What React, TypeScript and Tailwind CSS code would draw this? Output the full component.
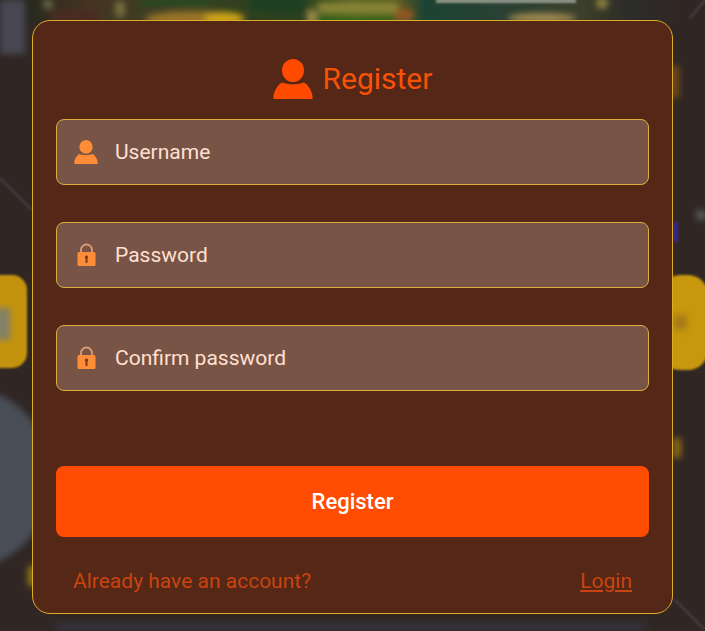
import { useState, type FormEvent, type ReactNode } from 'react';

interface FieldProps {
  id: string;
  label: string;
  type: string;
  icon: ReactNode;
  value: string;
  onChange: (v: string) => void;
}

export default function App() {
  const [username, setUsername] = useState('');
  const [password, setPassword] = useState('');
  const [confirm, setConfirm] = useState('');

  const handleSubmit = (e: FormEvent) => {
    e.preventDefault();
  };

  return (
    <div className="relative min-h-screen overflow-hidden bg-[#302725] px-8 pt-5 pb-4 font-['Roboto',sans-serif]">
      <Backdrop />

      <main className="relative rounded-[18px] border border-[#dcae28] bg-[#542716] px-[23px] pt-[38px] pb-[18px]">
        {/* Title */}
        <h1 className="mb-5 flex h-10 items-center justify-center gap-[10px] text-[30px] leading-10 text-[#f85208]">
          <UserIcon className="h-10 w-10 text-[#ff4a00]" />
          Register
        </h1>

        <form onSubmit={handleSubmit}>
          <div className="flex flex-col gap-[37px]">
            <Field
              id="username"
              label="Username"
              type="text"
              icon={<UserIcon className="h-6 w-6" />}
              value={username}
              onChange={setUsername}
            />
            <Field
              id="password"
              label="Password"
              type="password"
              icon={<LockIcon className="h-6 w-6" />}
              value={password}
              onChange={setPassword}
            />
            <Field
              id="confirm"
              label="Confirm password"
              type="password"
              icon={<LockIcon className="h-6 w-6" />}
              value={confirm}
              onChange={setConfirm}
            />
          </div>

          <button
            type="submit"
            className="mt-[75px] h-[71px] w-full rounded-lg bg-[#ff4c00] text-[22px] font-medium text-white"
          >
            Register
          </button>
        </form>

        {/* Footer */}
        <div className="mt-[30px] flex justify-between px-[17px] text-[21px] leading-7 text-[#c94410]">
          <span>Already have an account?</span>
          <a href="#login" className="underline">Login</a>
        </div>
      </main>
    </div>
  );
}

function Field({ id, label, type, icon, value, onChange }: FieldProps) {
  return (
    <div className="flex h-[66px] items-center gap-[17px] rounded-lg border border-[#dcae40] bg-[#785447] pl-[17px] text-[#ff8d37]">
      <label htmlFor={id} aria-label={label}>{icon}</label>
      <input
        id={id}
        type={type}
        placeholder={label}
        value={value}
        onChange={(e) => onChange(e.target.value)}
        className="h-full min-w-0 flex-1 bg-transparent text-[21px] text-[#ffe0d0] outline-none placeholder:text-[#ffe0d0]"
      />
    </div>
  );
}

/* Blurred game lobby behind the dialog */
function Backdrop() {
  return (
    <svg
      viewBox="0 0 705 631"
      preserveAspectRatio="xMidYMin slice"
      className="absolute inset-0 h-full w-full"
      aria-hidden="true"
    >
      <defs>
        <linearGradient id="lobby">
          <stop offset="0" stopColor="#26281f" />
          <stop offset="0.1" stopColor="#453522" />
          <stop offset="0.2" stopColor="#3d3e24" />
          <stop offset="0.3" stopColor="#33401f" />
          <stop offset="0.42" stopColor="#2c401f" />
          <stop offset="0.5" stopColor="#5a6424" />
          <stop offset="0.57" stopColor="#5d5a20" />
          <stop offset="0.61" stopColor="#1c4333" />
          <stop offset="0.75" stopColor="#2c4032" />
          <stop offset="0.85" stopColor="#3c3f2a" />
          <stop offset="0.92" stopColor="#2c2c28" />
          <stop offset="1" stopColor="#302725" />
        </linearGradient>
        <filter id="soft" x="-50%" y="-50%" width="200%" height="200%">
          <feGaussianBlur stdDeviation="3" />
        </filter>
        <filter id="edge">
          <feGaussianBlur stdDeviation="1" />
        </filter>
      </defs>

      <rect x="24" width="657" height="22" fill="url(#lobby)" />
      <g filter="url(#soft)">
        <rect x="50" y="10" width="50" height="12" fill="#4c2c22" />
        <rect x="140" y="-2" width="70" height="8" fill="#254a22" />
        <rect x="250" y="-2" width="56" height="14" fill="#1d3f20" />
        <ellipse cx="120" cy="9" rx="5" ry="9" fill="#7a7040" />
        <ellipse cx="48" cy="4" rx="5" ry="5" fill="#6b6a48" />
        <ellipse cx="195" cy="19" rx="50" ry="8" fill="#9a7328" />
        <ellipse cx="224" cy="18" rx="20" ry="6" fill="#cfa414" />
        <rect x="318" y="3" width="80" height="10" fill="#8a8634" />
        <rect x="318" y="15" width="80" height="6" fill="#2c6814" />
        <ellipse cx="312" cy="17" rx="5" ry="8" fill="#a08e50" />
        <ellipse cx="404" cy="15" rx="10" ry="7" fill="#8f5423" />
        <ellipse cx="542" cy="18" rx="34" ry="5" fill="#a08a50" />
        <circle cx="602" cy="3" r="6" fill="#8c8040" />
        <rect width="25" height="54" fill="#474751" />
        <circle cx="-40" cy="478" r="92" fill="#4a4d57" />
        <rect x="671" y="66" width="8" height="32" fill="#744b18" />
        <circle cx="701" cy="215" r="5" fill="#59605f" />
        <rect x="673" y="438" width="8" height="20" fill="#8a6c14" />
        <rect x="28" y="566" width="8" height="20" fill="#96790d" />
        <rect x="56" y="623" width="590" height="8" fill="#34313c" />
      </g>
      <g filter="url(#edge)">
        <rect x="436" y="-1" width="140" height="4" fill="#8e9488" />
        <path d="M0 178l32 32M675 600l30 30M690 18l15-18" stroke="#474144" strokeWidth="2" />
        <rect x="673" y="222" width="5" height="20" fill="#30258a" />
        <rect x="-40" y="275" width="67" height="93" rx="15" fill="#c4930e" />
        <rect x="660" y="275" width="48" height="95" rx="20" fill="#c79708" />
      </g>
      <g filter="url(#soft)">
        <rect x="-4" y="308" width="14" height="32" fill="#80806c" />
        <rect x="673" y="315" width="14" height="15" fill="#a67c12" />
      </g>
    </svg>
  );
}

function UserIcon({ className }: { className: string }) {
  return (
    <svg viewBox="0 0 40 40" fill="currentColor" className={className} aria-hidden="true">
      <ellipse cx="20" cy="11.500" rx="11" ry="11.500" />
      <path d="M9 23.500c3 1.200 6.500 1.800 11 1.800s8-.6 11-1.800c4 2 8.500 9 8.500 14.500v2H.5v-2C.5 32.500 5 25.500 9 23.500z" />
    </svg>
  );
}

function LockIcon({ className }: { className: string }) {
  return (
    <svg viewBox="0 0 24 24" className={className} aria-hidden="true">
      <path d="M7 10V7a5.500 5.500 0 0 1 11 0v3" fill="none" stroke="#dc9c73" strokeWidth="1.800" />
      <rect x="3.500" y="9" width="18" height="14" rx="1.500" fill="currentColor" />
      <path d="M12.500 12.500a1.800 1.800 0 0 1 1 3.200V20h-2v-4.300a1.800 1.800 0 0 1 1-3.200z" fill="#7a3d18" />
    </svg>
  );
}
